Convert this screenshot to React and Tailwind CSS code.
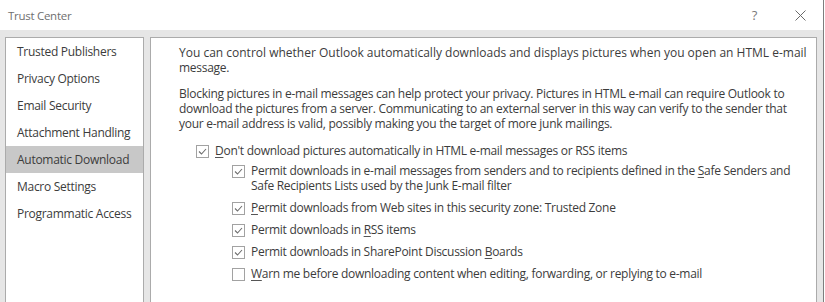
import React from "react";

const font = { fontFamily: '"Open Sans", "Noto Sans", sans-serif' };

function Box({ checked }) {
  return (
    <span className="mt-[2px] flex h-[13px] w-[13px] shrink-0 items-center justify-center border border-[#a2a2a2] bg-white">
      {checked && (
        <svg width="11" height="11" viewBox="0 0 11 11">
          <polyline points="2,5.5 4.5,8 9,3" fill="none" stroke="#6e6e6e" strokeWidth="1.1" />
        </svg>
      )}
    </span>
  );
}

function U({ children }) {
  return <span className="underline decoration-[#555] underline-offset-[2px]">{children}</span>;
}

function Row({ checked, children }) {
  return (
    <div className="flex items-start gap-[6px]">
      <Box checked={checked} />
      <div className="whitespace-nowrap">{children}</div>
    </div>
  );
}

const nav = [
  "Trusted Publishers",
  "Privacy Options",
  "Email Security",
  "Attachment Handling",
  "Automatic Download",
  "Macro Settings",
  "Programmatic Access",
];

export default function App() {
  return (
    <div
      className="flex h-[302px] w-[825px] overflow-hidden text-[12px] leading-[15px] tracking-[-0.28px] text-[#3c3c3c]"
      style={font}
    >
      <div className="flex w-[823px] shrink-0 flex-col bg-[#e6e6e6]">
        <div className="flex h-[30px] shrink-0 items-center bg-white pl-[8px]">
          <span className="text-[11.5px] text-[#6f6f6f]">Trust Center</span>
          <span className="ml-auto mr-[38px] text-[13px] text-[#7a7a7a]">?</span>
          <svg className="mr-[17px]" width="11" height="11" viewBox="0 0 11 11">
            <path d="M0.5 0.5 L10.5 10.5 M10.5 0.5 L0.5 10.5" stroke="#6a6a6a" strokeWidth="1" />
          </svg>
        </div>
        <div className="flex gap-[6px] pl-[5px] pt-[7px]">
          <div className="h-[300px] w-[139px] shrink-0 border border-[#ababab] bg-white">
            {nav.map((n) => (
              <div
                key={n}
                className={
                  "flex h-[27px] items-center whitespace-nowrap pl-[11px] " +
                  (n === "Automatic Download" ? "bg-[#c8c8c8]" : "")
                }
              >
                {n}
              </div>
            ))}
          </div>
          <div className="h-[300px] w-[667px] shrink-0 border border-[#ababab] bg-white pl-[28px] pt-[7px]">
            <p className="whitespace-nowrap">
              <span className="tracking-normal">
                You can control whether Outlook automatically downloads and displays pictures when you open an HTML e-mail
              </span>
              <br />
              message.
            </p>
            <p className="mt-[11px] whitespace-nowrap">
              Blocking pictures in e-mail messages can help protect your privacy. Pictures in HTML e-mail can require Outlook to
              <br />
              download the pictures from a server. Communicating to an external server in this way can verify to the sender that
              <br />
              your e-mail address is valid, possibly making you the target of more junk mailings.
            </p>
            <div className="mt-[12px] pl-[17px]">
              <Row checked>
                <U>D</U>on't download pictures automatically in HTML e-mail messages or RSS items
              </Row>
              <div className="mt-[5px] flex flex-col gap-[7px] pl-[36px]">
                <Row checked>
                  Permit downloads in e-mail messages from senders and to recipients defined in the <U>S</U>afe Senders and
                  <br />
                  Safe Recipients Lists used by the Junk E-mail filter
                </Row>
                <Row checked>
                  <U>P</U>ermit downloads from Web sites in this security zone: Trusted Zone
                </Row>
                <Row checked>
                  Permit downloads in <U>R</U>SS items
                </Row>
                <Row checked>
                  Permit downloads in SharePoint Discussion <U>B</U>oards
                </Row>
                <Row checked={false}>
                  <U>W</U>arn me before downloading content when editing, forwarding, or replying to e-mail
                </Row>
              </div>
            </div>
          </div>
        </div>
      </div>
      <div className="w-[1px] shrink-0 bg-[#7e7e7e]" />
      <div className="flex-1 bg-white" />
    </div>
  );
}
